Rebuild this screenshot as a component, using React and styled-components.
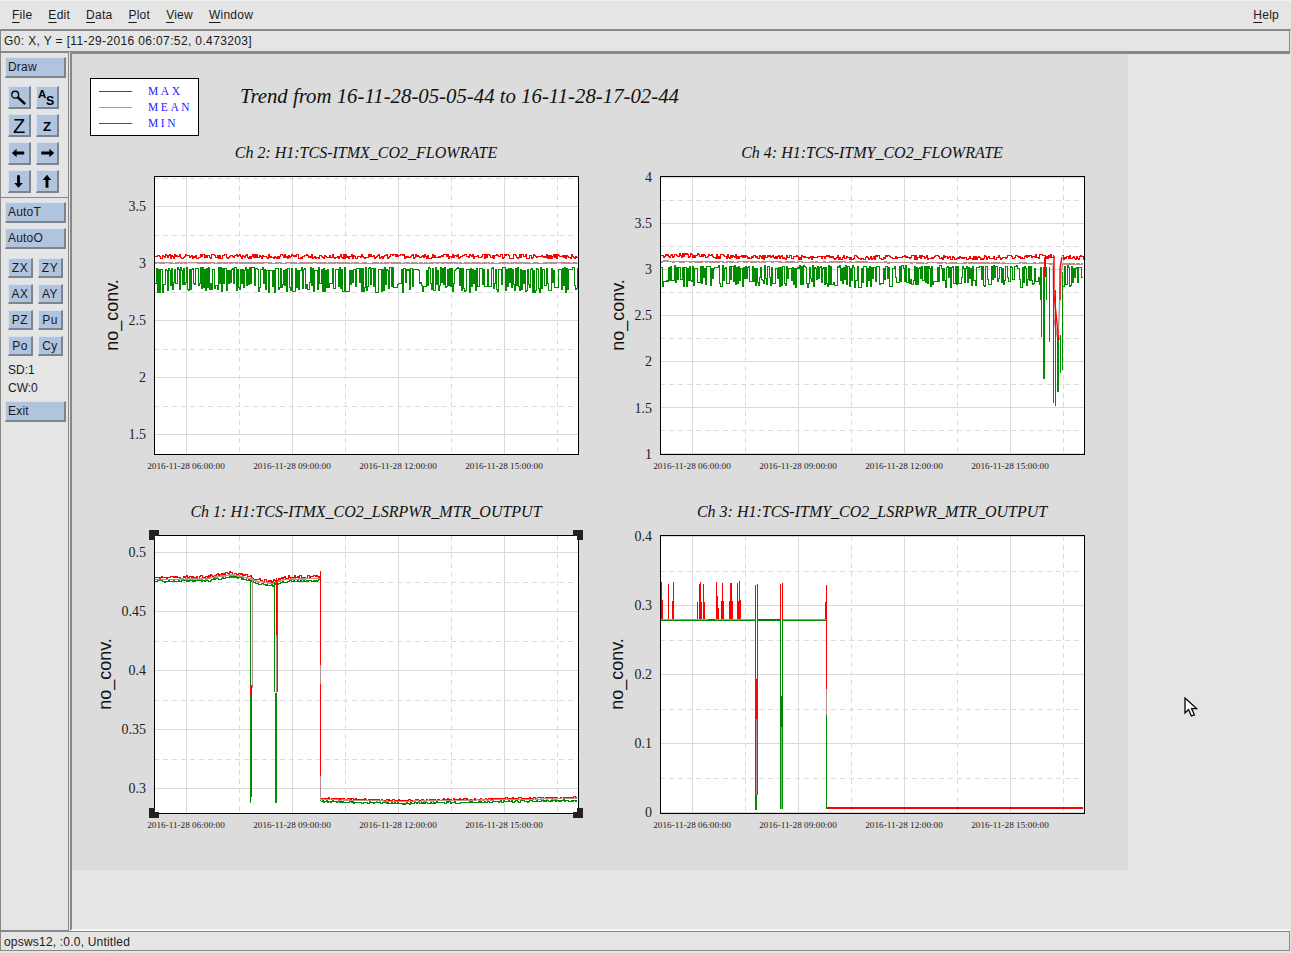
import React from "react";
import styled, { createGlobalStyle } from "styled-components";

const RED = "#ff0000";
const MEAN = "#bc8f8f";
const GREEN = "#008b00";

const GlobalStyle = createGlobalStyle`
	html, body {
		margin: 0;
		padding: 0;
		background: #e5e5e5;
	}
	* {
		box-sizing: border-box;
	}
`;

const Root = styled.div`
	width: 1291px;
	height: 953px;
	display: flex;
	flex-direction: column;
	padding-bottom: 2px;
	overflow: hidden;
	background: #e5e5e5;
	color: #1a1a1a;
	font-family: "Liberation Sans", Arial, sans-serif;
	font-size: 12px;
`;

const MenuBar = styled.div`
	height: 30px;
	flex: none;
	display: flex;
	align-items: center;
	gap: 16px;
	padding: 0 12px 1px 12px;
	border-top: 1px solid #f2f2f2;
	border-bottom: 1px solid #888;
	letter-spacing: 0.25px;
`;

const MenuItem = styled.span`
	margin-left: ${(p) => (p.$push ? "auto" : "0")};
	& > u {
		text-underline-offset: 3px;
	}
`;

const InfoBar = styled.div`
	height: 22px;
	flex: none;
	width: 1290px;
	display: flex;
	align-items: center;
	padding-left: 3px;
	border: 1px solid #888;
	letter-spacing: 0.37px;
`;

const Body = styled.div`
	flex: 1;
	min-height: 0;
	display: flex;
`;

const Sidebar = styled.div`
	width: 69px;
	margin-right: 1px;
	flex: none;
	display: flex;
	flex-direction: column;
	align-items: flex-start;
	padding-top: 4px;
	border: 1px solid #888;
`;

const Raised = styled.button`
	display: flex;
	align-items: center;
	padding: 0;
	background: #b0c4de;
	color: #1a1a1a;
	font-family: inherit;
	font-size: 12px;
	border-style: solid;
	border-width: 1px 2px 2px 1px;
	border-color: #d6e0ee #7c8490 #7c8490 #d6e0ee;
`;

const TextButton = styled(Raised)`
	width: 61px;
	height: 21px;
	margin-left: 4px;
	margin-top: ${(p) => p.$top || 0}px;
	padding-left: 2px;
	letter-spacing: 0.2px;
`;

const IconGrid = styled.div`
	display: grid;
	grid-template-columns: 23px 23px;
	gap: 5px;
	margin: 8px 0 0 7px;
`;

const IconButton = styled(Raised)`
	width: 23px;
	height: 23px;
	justify-content: center;
`;

const SmallGrid = styled.div`
	display: grid;
	grid-template-columns: 25px 25px;
	column-gap: 5px;
	row-gap: 6px;
	margin: 9px 0 0 7px;
`;

const SmallButton = styled(Raised)`
	width: 25px;
	height: 20px;
	justify-content: center;
	letter-spacing: 0.5px;
`;

const Divider = styled.div`
	align-self: stretch;
	height: 1px;
	margin-top: 4px;
	background: #888;
`;

const SideLabel = styled.div`
	height: 18px;
	line-height: 18px;
	padding-left: 7px;
	margin-top: ${(p) => p.$top || 0}px;
`;

const Main = styled.div`
	position: relative;
	flex: 1;
	width: 1219px;
	margin-right: 1px;
	border-left: 2px solid #888;
	border-top: 2px solid #888;
	border-bottom: 2px solid #f6f6f6;
`;

const Page = styled.div`
	width: 1056px;
	height: 816px;
	background: #dcdcdc;
	padding-top: 24px;
`;

const Header = styled.div`
	height: 65px;
	display: flex;
	align-items: flex-start;
	padding-left: 18px;
`;

const Legend = styled.div`
	width: 109px;
	height: 58px;
	display: flex;
	flex-direction: column;
	justify-content: center;
	background: #fff;
	border: 1px solid #000;
	padding-left: 8px;
`;

const LegendRow = styled.div`
	height: 16px;
	display: flex;
	align-items: center;
	gap: 16px;
`;

const Swatch = styled.span`
	width: 33px;
	height: 1px;
	background: ${(p) => p.$color};
`;

const LegendName = styled.span`
	color: #1c1cff;
	font-family: "Liberation Serif", "Times New Roman", serif;
	font-size: 11.5px;
	letter-spacing: 2.6px;
`;

const Title = styled.div`
	margin: 5px 0 0 41px;
	font-family: "Liberation Serif", "Times New Roman", serif;
	font-style: italic;
	font-size: 20.8px;
	line-height: 26px;
	color: #111;
	white-space: nowrap;
`;

const ChartGrid = styled.div`
	display: grid;
	grid-template-columns: 498px 498px;
	column-gap: 8px;
	row-gap: 22px;
	padding-left: 20px;
`;

const ChartPanel = styled.div`
	display: flex;
	flex-direction: column;
`;

const ChartTitle = styled.div`
	height: 22px;
	padding: 0 12px 0 62px;
	text-align: center;
	line-height: 20px;
	font-family: "Liberation Serif", "Times New Roman", serif;
	font-style: italic;
	font-size: 16px;
	color: #111;
	white-space: nowrap;
`;

const ChartSvg = styled.svg`
	display: block;
	width: 498px;
	height: 315px;
`;

const Cursor = styled.svg`
	position: absolute;
	left: 1112px;
	top: 643px;
	width: 14px;
	height: 21px;
`;

const Footer = styled.div`
	height: 20px;
	flex: none;
	width: 1290px;
	display: flex;
	align-items: center;
	padding: 1px 0 0 3px;
	border: 1px solid #888;
	letter-spacing: 0.2px;
`;

const rng = (seed) => () => {
	seed |= 0;
	seed = (seed + 0x6d2b79f5) | 0;
	let t = Math.imul(seed ^ (seed >>> 15), 1 | seed);
	t = (t + Math.imul(t ^ (t >>> 7), 61 | t)) ^ t;
	return ((t ^ (t >>> 14)) >>> 0) / 4294967296;
};

// step line through y(x) for every pixel column
const stepPath = (x0, x1, fn) => {
	let d = `M${x0} ${fn(x0)}`;
	for (let x = x0 + 1; x <= x1; x++) {
		d += `H${x}V${fn(x)}`;
	}
	return d;
};

const noisy = (seed, amp, base) => {
	const r = rng(seed);
	return (x) => Math.round(base(x) + (r() - 0.5) * amp) + 0.5;
};

// the dense green band of the flowrate channels
const band = (seed, top, bottom) => {
	const r = rng(seed);
	let high = true;
	let hold = 0;
	let val = top;
	return () => {
		if (hold <= 0) {
			high = r() < 0.72 ? !high : high;
			val = high ? top + r() * 3 : bottom - 10 + r() * 10;
			hold = r() < 0.12 ? 2 + Math.floor(r() * 2) : 1;
		}
		hold--;
		return Math.round(val) + 0.5;
	};
};

const lerpPoints = (pts) => (x) => {
	for (let i = 1; i < pts.length; i++) {
		if (x <= pts[i][0]) {
			const [a, b] = pts[i - 1];
			const [c, d] = pts[i];
			return b + ((x - a) / (c - a || 1)) * (d - b);
		}
	}
	return pts[pts.length - 1][1];
};

const Series = ({ d, color, width = 1 }) => (
	<path d={d} fill="none" stroke={color} strokeWidth={width} shapeRendering="crispEdges" />
);

const Lines = ({ items }) =>
	items.map(([x, y1, y2, color, w = 1], i) => (
		<line key={i} x1={x} x2={x} y1={y1} y2={y2} stroke={color} strokeWidth={w} shapeRendering="crispEdges" />
	));

const Ch2Data = () => (
	<>
		<Series d={stepPath(155, 577, noisy(21, 5, () => 256))} color={RED} />
		<Series d={stepPath(155, 577, noisy(22, 1.6, () => 262.5))} color={MEAN} width={1.2} />
		<Series d={stepPath(155, 577, band(23, 267, 292))} color={GREEN} />
	</>
);

const Ch4Data = () => {
	const bandFn = band(41, 265, 287);
	const redBase = lerpPoints([[661, 255], [800, 257], [1000, 257], [1043, 256], [1054, 256]]);
	const red = noisy(42, 4.5, redBase);
	const meanBase = lerpPoints([[661, 261], [900, 262], [1053, 263]]);
	const mean = noisy(43, 1.2, meanBase);
	return (
		<>
			<Series d={stepPath(661, 1054, red)} color={RED} />
			<Series d={stepPath(661, 1053, mean)} color={MEAN} width={1.2} />
			<Series d={stepPath(1062, 1083, noisy(44, 1.6, () => 263.5))} color={MEAN} width={1.2} />
			<path d="M1053 263L1054 320L1058 340L1061 273L1063 263" fill="none" stroke={MEAN} strokeWidth="1.4" />
			<Series d={stepPath(661, 1040, bandFn)} color={GREEN} />
			<Series d={stepPath(1063, 1083, band(45, 265, 287))} color={GREEN} />
			<Lines
				items={[
					[1040.5, 267, 300, GREEN],
					[1041.5, 267, 337, GREEN],
					[1044, 267, 379, GREEN, 2],
					[1046.5, 267, 300, GREEN],
					[1049.5, 267, 342, GREEN],
					[1053.5, 267, 403, GREEN],
					[1055.5, 290, 406, GREEN],
					[1057.5, 335, 392, GREEN, 2],
					[1060.5, 335, 373, GREEN],
					[1062.5, 272, 370, GREEN],
					[1044.5, 257, 277, RED, 2],
				]}
			/>
			<path d="M1054 256V294L1058 333L1059 340M1060 300V268L1062 257" fill="none" stroke={RED} strokeWidth="1.4" />
			<Series d={stepPath(1062, 1083, noisy(46, 4.5, () => 257))} color={RED} />
		</>
	);
};

const Ch1Data = () => {
	const left = lerpPoints([[155, 577], [205, 576.5], [231, 572], [249, 576], [256, 579], [272, 581], [285, 577], [320, 576]]);
	const right = lerpPoints([[321, 798], [400, 800], [450, 799], [578, 797]]);
	return (
		<>
			<Series d={stepPath(155, 320, noisy(11, 3, left))} color={RED} />
			<Series d={stepPath(155, 320, noisy(12, 0.8, (x) => left(x) + 2))} color={MEAN} width={1.3} />
			<Series d={stepPath(155, 320, noisy(13, 1.6, (x) => left(x) + 4))} color={GREEN} />
			<Series d={stepPath(321, 577, noisy(14, 1.6, right))} color={RED} />
			<Series d={stepPath(321, 577, noisy(15, 0.6, (x) => right(x) + 1))} color={MEAN} />
			<Series d={stepPath(321, 577, noisy(16, 1.8, (x) => right(x) + 3))} color={GREEN} />
			<Lines
				items={[
					[250.5, 581, 803, GREEN, 1],
					[252, 578, 688, MEAN, 1],
					[251.5, 690, 797, GREEN, 1],
					[251, 685, 695, RED, 2],
					[274.5, 582, 692, GREEN, 1],
					[277, 582, 692, GREEN, 1],
					[276, 578, 635, RED, 1],
					[276, 635, 693, MEAN, 1],
					[276, 693, 803, GREEN, 2],
					[320.5, 580, 801, GREEN, 1],
					[320, 571, 665, RED, 1],
					[320.5, 665, 690, MEAN, 1],
					[320.5, 684, 776, RED, 1],
					[320.5, 776, 800, MEAN, 1],
				]}
			/>
		</>
	);
};

const CH3_SPIKES = [
	[33, 36], [37, 90], [53, 42], [55, 96], [67, 93], [70, 36], [142, 96], [146, 42], [149, 36],
	[152, 96], [160, 42], [163, 96], [197, 93], [199, 36], [202, 78], [205, 114], [214, 93], [217, 39],
	[220, 93], [238, 93], [241, 39], [244, 39], [247, 93], [262, 39], [265, 93], [268, 33], [271, 90],
	[316, 45], [322, 42], [391, 42], [397, 39], [526, 96], [529, 45],
];

const Ch3Data = () => (
	<>
		<Lines items={CH3_SPIKES.map(([px, py]) => [Math.round(650 + px / 3) + 0.5, 570 + py / 3, 620, RED, 1])} />
		<path d="M661 619.5H755M758 619.5H780M783 619.5H826" stroke={MEAN} fill="none" shapeRendering="crispEdges" />
		<path d="M708 619.5H715M757 619.5H780" stroke={RED} fill="none" shapeRendering="crispEdges" />
		<path d="M661 620.5H755.5V810M757.5 795V620.5H780.5V809M782.5 809V620.5H826.5" stroke={GREEN} fill="none" shapeRendering="crispEdges" />
		<Lines
			items={[
				[756.5, 679, 719, RED, 1],
				[756.5, 719, 795, MEAN, 1],
				[756, 795, 810, GREEN, 2],
				[781.5, 696, 727, RED, 1],
				[781.5, 727, 809, MEAN, 1],
				[826, 586, 689, RED, 1],
				[826, 689, 715, MEAN, 1],
				[826.5, 715, 809, GREEN, 1],
			]}
		/>
		<path d="M827 808H1083" stroke={RED} strokeWidth="2" fill="none" shapeRendering="crispEdges" />
	</>
);

const Handle = ({ x, y, ix, iy }) => (
	<>
		<rect x={x} y={y} width="10" height="10" fill="#222" />
		<rect x={ix} y={iy} width="4" height="4" fill="#fff" />
	</>
);

const Chart = ({ ox, oy, ticks, labelX, selected, children }) => {
	const fx = ox + 62;
	const fy = oy + 12;
	const W = 424;
	const H = 277;
	const step = ticks[1].y - ticks[0].y;
	const first = ticks[0].y;
	const solid = [];
	const dashed = [];
	for (let i = -2; i < ticks.length + 2; i++) {
		const y = first + i * step;
		if (y >= fy && y <= fy + H) solid.push(y);
		const m = y + step / 2;
		if (m >= fy && m <= fy + H) dashed.push(m);
	}
	const xs = [0, 1, 2, 3].map((i) => fx + 32 + i * 106);
	return (
		<ChartSvg viewBox={`${ox} ${oy} 498 315`}>
			<rect x={fx} y={fy} width={W} height={H} fill="#fff" />
			<g stroke="#d9d9d9" strokeWidth="1" shapeRendering="crispEdges">
				{solid.map((y) => (
					<line key={y} x1={fx} x2={fx + W} y1={Math.round(y) + 0.5} y2={Math.round(y) + 0.5} />
				))}
				{xs.map((x) => (
					<line key={x} x1={x + 0.5} x2={x + 0.5} y1={fy} y2={fy + H} />
				))}
			</g>
			<g stroke="#dcdcdc" strokeWidth="1" strokeDasharray="5 4" shapeRendering="crispEdges">
				{dashed.map((y) => (
					<line key={y} x1={fx} x2={fx + W} y1={Math.round(y) + 0.5} y2={Math.round(y) + 0.5} />
				))}
				{xs.map((x) => (
					<line key={x} x1={x + 53.5} x2={x + 53.5} y1={fy} y2={fy + H} />
				))}
			</g>
			{children}
			<rect x={fx + 0.5} y={fy - 0.5} width={W} height={H + 0.5} fill="none" stroke="#000" shapeRendering="crispEdges" />
			{ticks.map((t) => (
				<text key={t.label} x={fx - 8} y={t.y + 5} textAnchor="end" fontFamily="Liberation Serif, serif" fontSize="14" fill="#222">
					{t.label}
				</text>
			))}
			{xs.map((x, i) => (
				<text key={x} x={x} y={fy + H + 15} textAnchor="middle" fontFamily="Liberation Serif, serif" fontSize="9.2" fill="#222">
					{`2016-11-28 ${["06", "09", "12", "15"][i]}:00:00`}
				</text>
			))}
			<text
				transform={`translate(${labelX} ${fy + 138}) rotate(-90)`}
				textAnchor="middle"
				fontFamily="Liberation Sans, sans-serif"
				fontSize="18"
				fill="#111"
			>
				no_conv.
			</text>
			{selected && (
				<>
					<Handle x={fx - 5} y={fy - 6} ix={fx + 1} iy={fy} />
					<Handle x={fx + W - 5} y={fy - 6} ix={fx + W - 5} iy={fy} />
					<Handle x={fx - 5} y={fy + H - 5} ix={fx + 1} iy={fy + H - 5} />
					<Handle x={fx + W - 5} y={fy + H - 5} ix={fx + W - 5} iy={fy + H - 5} />
				</>
			)}
		</ChartSvg>
	);
};

const Glyph = ({ children }) => (
	<svg width="21" height="21" viewBox="0 0 21 21" fill="#000">
		{children}
	</svg>
);

const ICONS = [
	<Glyph key="zoom">
		<circle cx="6.5" cy="7.5" r="3.6" fill="none" stroke="#000" strokeWidth="1.4" />
		<path d="M9.5 10.5L17 17.5" stroke="#000" strokeWidth="2.6" />
	</Glyph>,
	<Glyph key="as">
		<text x="1" y="11" fontFamily="Liberation Sans, sans-serif" fontWeight="700" fontSize="12">A</text>
		<text x="9.5" y="18" fontFamily="Liberation Sans, sans-serif" fontWeight="700" fontSize="13">S</text>
	</Glyph>,
	<Glyph key="bigz">
		<text x="10.5" y="18" textAnchor="middle" fontFamily="Liberation Sans, sans-serif" fontSize="21">Z</text>
	</Glyph>,
	<Glyph key="smallz">
		<text x="10.5" y="16" textAnchor="middle" fontFamily="Liberation Sans, sans-serif" fontWeight="700" fontSize="14">Z</text>
	</Glyph>,
	<Glyph key="left">
		<path d="M3 10L8 5.5V8.5H16V11.5H8V14.5Z" />
	</Glyph>,
	<Glyph key="right">
		<path d="M18 10L13 5.5V8.5H4.5V11.5H13V14.5Z" />
	</Glyph>,
	<Glyph key="down">
		<path d="M10 17L5.5 12H8.5V4H11.5V12H14.5Z" />
	</Glyph>,
	<Glyph key="up">
		<path d="M10.5 3.5L15 9H12V17H9V9H6Z" />
	</Glyph>,
];

const App = () => (
	<Root>
		<GlobalStyle />
		<MenuBar>
			<MenuItem><u>F</u>ile</MenuItem>
			<MenuItem><u>E</u>dit</MenuItem>
			<MenuItem><u>D</u>ata</MenuItem>
			<MenuItem><u>P</u>lot</MenuItem>
			<MenuItem><u>V</u>iew</MenuItem>
			<MenuItem><u>W</u>indow</MenuItem>
			<MenuItem $push><u>H</u>elp</MenuItem>
		</MenuBar>
		<InfoBar>G0: X, Y = [11-29-2016 06:07:52, 0.473203]</InfoBar>
		<Body>
			<Sidebar>
				<TextButton>Draw</TextButton>
				<IconGrid>
					{ICONS.map((icon) => (
						<IconButton key={icon.key}>{icon}</IconButton>
					))}
				</IconGrid>
				<Divider />
				<TextButton $top={4}>AutoT</TextButton>
				<TextButton $top={5}>AutoO</TextButton>
				<SmallGrid>
					{["ZX", "ZY", "AX", "AY", "PZ", "Pu", "Po", "Cy"].map((name) => (
						<SmallButton key={name}>{name}</SmallButton>
					))}
				</SmallGrid>
				<SideLabel $top={5}>SD:1</SideLabel>
				<SideLabel>CW:0</SideLabel>
				<TextButton $top={4}>Exit</TextButton>
			</Sidebar>
			<Main>
				<Page>
					<Header>
						<Legend>
							<LegendRow><Swatch $color={RED} /><LegendName>MAX</LegendName></LegendRow>
							<LegendRow><Swatch $color={MEAN} /><LegendName>MEAN</LegendName></LegendRow>
							<LegendRow><Swatch $color={GREEN} /><LegendName>MIN</LegendName></LegendRow>
						</Legend>
						<Title>Trend from 16-11-28-05-05-44 to 16-11-28-17-02-44</Title>
					</Header>
					<ChartGrid>
						<ChartPanel>
							<ChartTitle>Ch 2: H1:TCS-ITMX_CO2_FLOWRATE</ChartTitle>
							<Chart
								ox={92}
								oy={165}
								labelX={118}
								ticks={[
									{ label: "3.5", y: 206 },
									{ label: "3", y: 263 },
									{ label: "2.5", y: 320 },
									{ label: "2", y: 377 },
									{ label: "1.5", y: 434 },
								]}
							>
								<Ch2Data />
							</Chart>
						</ChartPanel>
						<ChartPanel>
							<ChartTitle>Ch 4: H1:TCS-ITMY_CO2_FLOWRATE</ChartTitle>
							<Chart
								ox={598}
								oy={165}
								labelX={624}
								ticks={[
									{ label: "4", y: 177 },
									{ label: "3.5", y: 223 },
									{ label: "3", y: 269 },
									{ label: "2.5", y: 315 },
									{ label: "2", y: 361 },
									{ label: "1.5", y: 407.5 },
									{ label: "1", y: 453.5 },
								]}
							>
								<Ch4Data />
							</Chart>
						</ChartPanel>
						<ChartPanel>
							<ChartTitle>Ch 1: H1:TCS-ITMX_CO2_LSRPWR_MTR_OUTPUT</ChartTitle>
							<Chart
								ox={92}
								oy={524}
								labelX={111}
								selected
								ticks={[
									{ label: "0.5", y: 552 },
									{ label: "0.45", y: 611 },
									{ label: "0.4", y: 670 },
									{ label: "0.35", y: 729 },
									{ label: "0.3", y: 787.5 },
								]}
							>
								<Ch1Data />
							</Chart>
						</ChartPanel>
						<ChartPanel>
							<ChartTitle>Ch 3: H1:TCS-ITMY_CO2_LSRPWR_MTR_OUTPUT</ChartTitle>
							<Chart
								ox={598}
								oy={524}
								labelX={623}
								ticks={[
									{ label: "0.4", y: 536 },
									{ label: "0.3", y: 605 },
									{ label: "0.2", y: 674 },
									{ label: "0.1", y: 743 },
									{ label: "0", y: 812 },
								]}
							>
								<Ch3Data />
							</Chart>
						</ChartPanel>
					</ChartGrid>
				</Page>
				<Cursor viewBox="0 0 14 21">
					<path d="M1 1V16L4.6 12.6L7.4 19L10.4 17.8L7.6 11.6H12.6Z" fill="#fff" stroke="#000" strokeWidth="1.3" strokeLinejoin="miter" />
				</Cursor>
			</Main>
		</Body>
		<Footer>opsws12, :0.0, Untitled</Footer>
	</Root>
);

export default App;
